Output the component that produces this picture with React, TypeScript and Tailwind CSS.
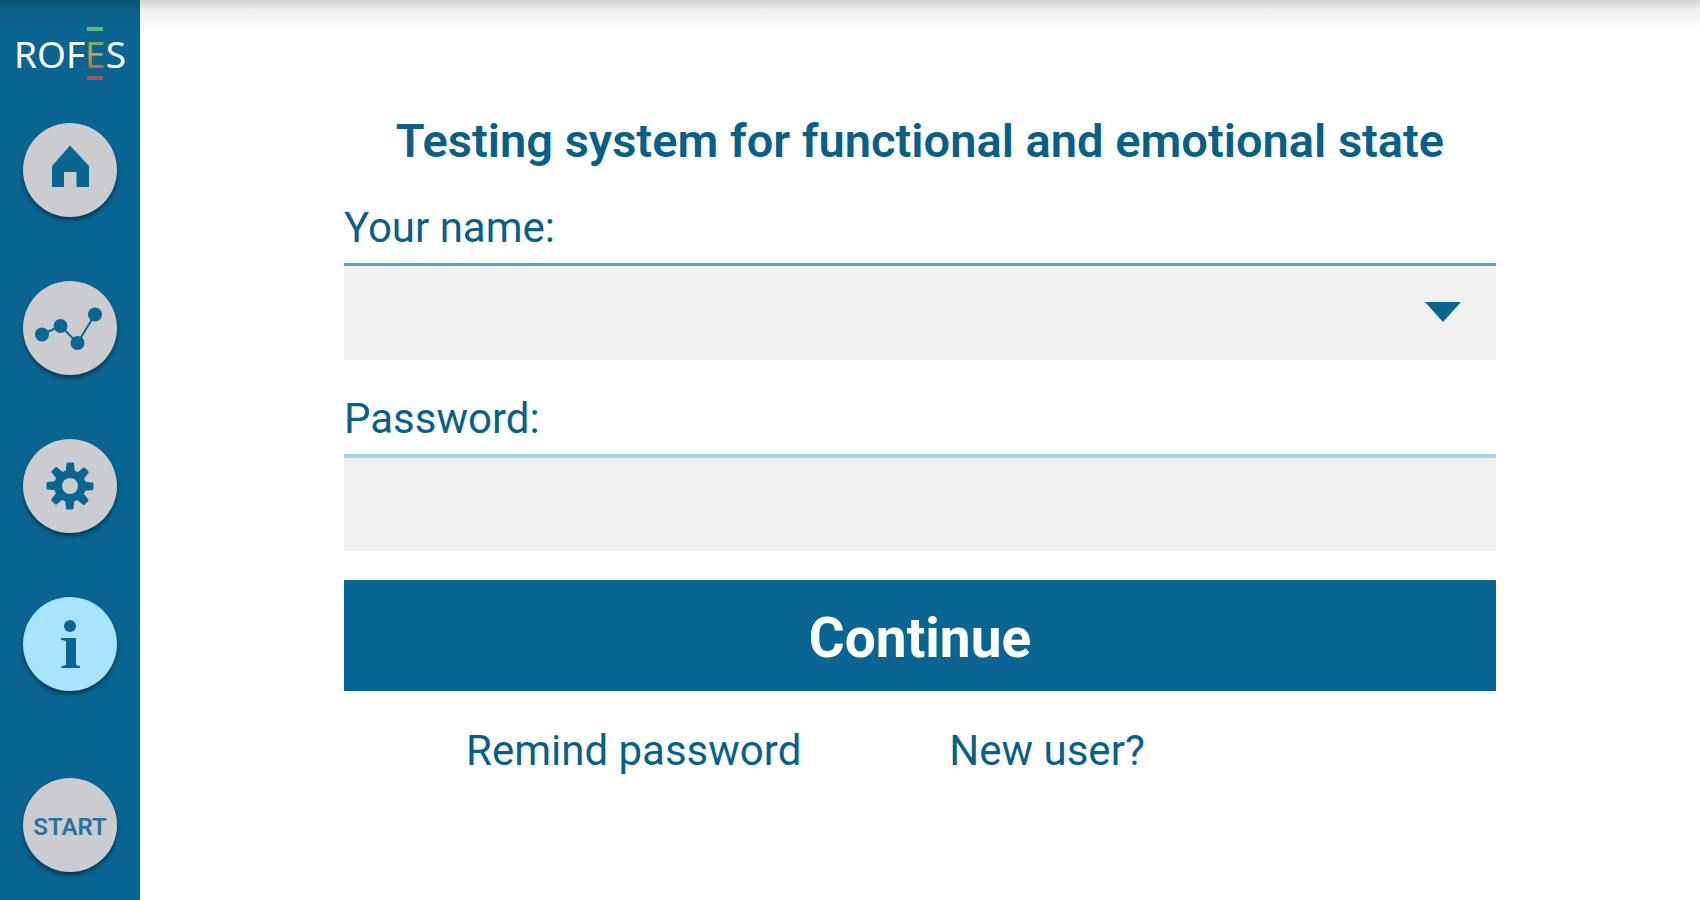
import { useState } from 'react';
import type { ReactNode } from 'react';

interface NavItem {
  id: string;
  label: string;
  icon: ReactNode;
}

const GEAR_ANGLES = [0, 45, 90, 135, 180, 225, 270, 315];

function HomeIcon() {
  return (
    <svg viewBox="0 0 94 94" className="size-full fill-[#0a6592]" aria-hidden="true">
      <path d="M47 22.500 L66 43 V64 H53.500 V49 H41 V64 H29 V43 Z" />
    </svg>
  );
}

function ChartIcon() {
  return (
    <svg viewBox="0 0 94 94" className="size-full fill-[#0a6592]" aria-hidden="true">
      <polyline points="19,53.500 37.500,45 54.500,62 72,33.500" fill="none" stroke="#0a6592" strokeWidth="2" />
      <circle cx="19" cy="53.500" r="7" />
      <circle cx="37.500" cy="45" r="7" />
      <circle cx="54.500" cy="62" r="7" />
      <circle cx="72" cy="33.500" r="7" />
    </svg>
  );
}

function GearIcon() {
  return (
    <svg viewBox="0 0 94 94" className="size-full fill-[#0a6592]" aria-hidden="true">
      {GEAR_ANGLES.map((angle) => (
        <path key={angle} d="M42.500 34 L43.500 24.500 Q43.700 23.500 45 23.500 H49.500 Q50.700 23.500 50.900 24.500 L52 34 Z" transform={`rotate(${angle} 47 47)`} />
      ))}
      <circle cx="47" cy="47" r="12" fill="none" stroke="#0a6592" strokeWidth="8" />
    </svg>
  );
}

function InfoIcon() {
  return (
    <svg viewBox="0 0 94 94" className="size-full fill-[#0a6592]" aria-hidden="true">
      <circle cx="47" cy="29" r="6" />
      <path d="M38 41 H53 V67 Q53 68.500 57 69 V71 H38.500 V69 Q43 68.500 43 67 V45 Q43 43.500 38 43 Z" />
    </svg>
  );
}

const NAV_ITEMS: NavItem[] = [
  { id: 'home', label: 'Home', icon: <HomeIcon /> },
  { id: 'results', label: 'Results', icon: <ChartIcon /> },
  { id: 'settings', label: 'Settings', icon: <GearIcon /> },
  { id: 'info', label: 'Information', icon: <InfoIcon /> },
];

function Logo() {
  return (
    <div className="flex h-[50px] items-center justify-center font-['Noto_Sans',sans-serif] text-[37px] leading-none text-white">
      <span>ROF</span>
      <span className="flex flex-col items-center">
        <span className="h-1 w-4 bg-[#5fb878]" />
        <span className="bg-linear-to-b from-[#6fa86a] from-25% via-[#d99a3c] via-50% to-[#d0643c] to-80% bg-clip-text py-1 text-transparent">E</span>
        <span className="h-1 w-4 bg-[#a5574f]" />
      </span>
      <span>S</span>
    </div>
  );
}

function Sidebar() {
  const [active, setActive] = useState('info');

  return (
    <aside className="flex w-[140px] shrink-0 flex-col items-center bg-[#0a6592] pt-7 pb-[26px]">
      <Logo />
      <nav className="mt-[45px] flex flex-col gap-16">
        {NAV_ITEMS.map((item) => (
          <button
            key={item.id}
            aria-label={item.label}
            onClick={() => setActive(item.id)}
            className={`size-[94px] cursor-pointer rounded-full shadow-[0_3px_4px_rgba(0,0,0,0.45)] ${
              active === item.id ? 'bg-[#a8e3ff]' : 'bg-[#cbcccf]'
            }`}
          >
            {item.icon}
          </button>
        ))}
      </nav>
      <button className="mt-[87px] size-[94px] cursor-pointer rounded-full bg-[#cbcccf] pt-1 text-2xl font-semibold text-[#2b7299] shadow-[0_3px_4px_rgba(0,0,0,0.45)]">
        START
      </button>
    </aside>
  );
}

function LoginForm() {
  const [name, setName] = useState('');
  const [password, setPassword] = useState('');

  return (
    <form className="mx-auto w-full max-w-[1152px]" onSubmit={(e) => e.preventDefault()}>
      <h1 className="text-center text-[47px] leading-[56px] font-semibold">
        Testing system for functional and emotional state
      </h1>

      <label htmlFor="name" className="mt-[34px] block text-[42px] leading-[50px]">
        Your name:
      </label>
      <div className="relative mt-[10px]">
        <select
          id="name"
          value={name}
          onChange={(e) => setName(e.target.value)}
          className="block h-[97px] w-full appearance-none border-t-[3px] border-[#4fa5c5] bg-[#f0f0f0] px-6 text-[42px] outline-none"
        >
          <option value="" />
        </select>
        <svg viewBox="0 0 36 20" className="pointer-events-none absolute top-[39px] right-[35px] h-5 w-9 fill-[#0a6592]" aria-hidden="true">
          <path d="M0 0 H36 L18 20 Z" />
        </svg>
      </div>

      <label htmlFor="password" className="mt-[34px] block text-[42px] leading-[50px]">
        Password:
      </label>
      <input
        id="password"
        type="password"
        value={password}
        onChange={(e) => setPassword(e.target.value)}
        className="mt-[10px] block h-[97px] w-full border-t-4 border-[#a2d6e5] bg-[#f0f0f0] px-6 text-[42px] outline-none"
      />

      <button
        type="submit"
        className="mt-[29px] block h-[111px] w-full cursor-pointer bg-[#0a6592] pt-1.5 text-[55px] font-bold text-white"
      >
        Continue
      </button>

      <div className="mt-8 flex gap-[148px] pl-[122px] text-[42px] leading-[56px]">
        <a href="#remind">Remind password</a>
        <a href="#register">New user?</a>
      </div>
    </form>
  );
}

export default function App() {
  return (
    <div className="relative flex min-h-screen bg-white font-[Roboto,sans-serif] text-[#0a5f86]">
      <Sidebar />
      <main className="flex-1 px-8 pt-[113px]">
        <LoginForm />
      </main>
      {/* Soft shade along the top edge */}
      <div className="pointer-events-none absolute inset-x-0 top-0 h-8 bg-linear-to-b from-black/18 via-black/6 via-30% to-transparent" />
    </div>
  );
}
